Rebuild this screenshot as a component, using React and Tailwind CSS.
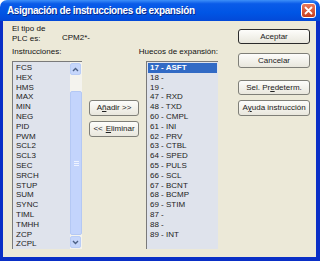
const left = ["FCS", "HEX", "HMS", "MAX", "MIN", "NEG", "PID", "PWM", "SCL2", "SCL3", "SEC", "SRCH", "STUP", "SUM", "SYNC", "TIML", "TMHH", "ZCP", "ZCPL"];
const right = ["17 - ASFT", "18 -", "19 -", "47 - RXD", "48 - TXD", "60 - CMPL", "61 - INI", "62 - PRV", "63 - CTBL", "64 - SPED", "65 - PULS", "66 - SCL", "67 - BCNT", "68 - BCMP", "69 - STIM", "87 -", "88 -", "89 - INT"];

function Btn({ children, main, className = "" }) {
  return (
    <div
      className={`flex items-center justify-center whitespace-nowrap rounded-[3px] border bg-linear-to-b from-[#fdfdfb] to-[#e9e7dd] text-[8px] text-[#222] ${main ? "border-[#2b2b2b]" : "border-[#7f7f78]"} ${className}`}
    >
      {children}
    </div>
  );
}

function Arrow({ up }) {
  return (
    <div className="flex h-[12px] w-[11px] items-center justify-center rounded-[2px] border border-[#b9cdf7] bg-[#c6d6fb]">
      <svg width="7" height="5" viewBox="0 0 7 5">
        <path d={up ? "M1 4 L3.5 1.5 L6 4" : "M1 1 L3.5 3.5 L6 1"} fill="none" stroke="#4d6185" strokeWidth="1.4" />
      </svg>
    </div>
  );
}

function ListBox({ items, scroll, selected, className = "" }) {
  return (
    <div className={`flex h-[188px] overflow-hidden border-t border-l border-[#7a7a7a] border-r-[#f4f4f4] border-b-[#ffffff] bg-[#dfe3ec] ${className}`}>
      <div className="flex-1 pt-[1px]">
        {items.map((t, i) => (
          <div
            key={t}
            className={`h-[9.8px] whitespace-nowrap leading-[9.8px] ${selected === i ? "mx-[1px] bg-[#316ac5] pl-[2px] font-bold text-white" : "pl-[3px] text-[#222]"}`}
          >
            {t}
          </div>
        ))}
      </div>
      {scroll && (
        <div className="flex w-[12px] flex-col bg-[#f4f3ee] pt-[1px] pb-[1px]">
          <Arrow up />
          <div className="h-[16px]" />
          <div className="flex flex-1 items-center justify-center rounded-[2px] border border-[#b4c8f4] bg-[#c3d4fc]">
            <div className="flex flex-col gap-[1px]">
              <div className="h-[1px] w-[5px] bg-[#eef3ff]" />
              <div className="h-[1px] w-[5px] bg-[#eef3ff]" />
              <div className="h-[1px] w-[5px] bg-[#eef3ff]" />
            </div>
          </div>
          <div className="h-[1px]" />
          <Arrow />
        </div>
      )}
    </div>
  );
}

export default function App() {
  return (
    <div className="flex h-[261px] w-[320px] flex-col bg-white font-['Liberation_Sans',Arial,sans-serif]">
      <div className="flex h-[21px] items-center rounded-t-[7px] bg-[linear-gradient(to_bottom,#3d8ff8_0%,#0a5be9_18%,#0055e5_60%,#0349d8_100%)] pr-[4px] pl-[7px]">
        <div className="flex-1 text-[10px] font-bold tracking-[-0.38px] text-white [text-shadow:1px_1px_#0b2a8a]">
          Asignación de instrucciones de expansión
        </div>
        <div className="flex h-[15px] w-[15px] items-center justify-center rounded-[3px] border border-white bg-linear-to-b from-[#e9785a] to-[#c43d1c]">
          <svg width="9" height="9" viewBox="0 0 9 9">
            <path d="M1.5 1.5 L7.5 7.5 M7.5 1.5 L1.5 7.5" stroke="white" strokeWidth="1.8" strokeLinecap="round" />
          </svg>
        </div>
      </div>
      <div className="flex flex-1 border-r-[4px] border-b-[4px] border-l-[3px] border-[#0a2fc6] bg-[#ece9d8] pl-[9px] text-[8px] text-[#111]">
        <div className="flex w-[206px] flex-col">
          <div className="mt-[3px] flex items-end leading-[10px]">
            <div className="w-[50px]">
              El tipo de
              <br />
              PLC es:
            </div>
            <div className="mb-[1px]">CPM2*-</div>
          </div>
          <div className="mt-[3px] flex whitespace-nowrap leading-[10px]">
            <div className="w-[136px]">Instrucciones:</div>
            <div>Huecos de expansión:</div>
          </div>
          <div className="mt-[4px] flex">
            <ListBox items={left} scroll className="w-[70px]" />
            <div className="ml-[7px] flex w-[50px] flex-col gap-[5px] pt-[39px]">
              <Btn className="h-[16px]">
                A<span className="underline">ñ</span>adir &gt;&gt;
              </Btn>
              <Btn className="h-[16px]">
                &lt;&lt; <span className="ml-[3px] underline">E</span>liminar
              </Btn>
            </div>
            <ListBox items={right} selected={0} className="ml-[7px] w-[72px]" />
          </div>
        </div>
        <div className="ml-[20px] flex w-[72px] flex-col pt-[8px]">
          <Btn main className="h-[15px]">Aceptar</Btn>
          <Btn className="mt-[9px] h-[15px]">Cancelar</Btn>
          <Btn className="mt-[12px] h-[15px]">
            Sel. Pr<span className="underline">e</span>determ.
          </Btn>
          <Btn className="mt-[5px] h-[16px]">
            A<span className="underline">y</span>uda instrucción
          </Btn>
        </div>
      </div>
    </div>
  );
}
